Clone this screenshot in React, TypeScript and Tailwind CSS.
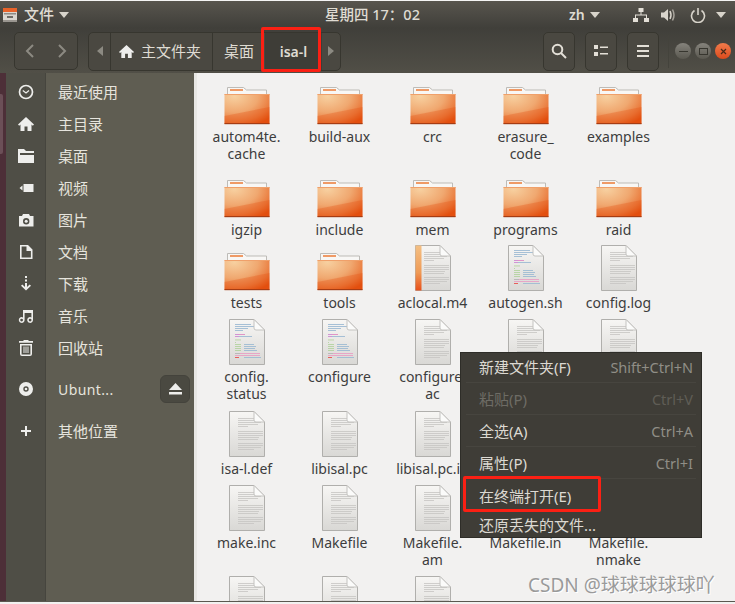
import React from "react";

const font = { fontFamily: '"Noto Sans", "Noto Sans CJK SC", sans-serif' };

function Defs() {
  return (
    <svg className="absolute w-0 h-0">
      <defs>
        <radialGradient id="fg" cx="0.22" cy="0.08" r="1.05">
          <stop offset="0" stopColor="#f7d0a0" />
          <stop offset="0.5" stopColor="#f0a870" />
          <stop offset="0.8" stopColor="#ea7a3c" />
          <stop offset="1" stopColor="#e2500f" />
        </radialGradient>
        <linearGradient id="dg" x1="0" y1="0" x2="0" y2="1">
          <stop offset="0" stopColor="#f7f6f4" />
          <stop offset="1" stopColor="#d9d8d5" />
        </linearGradient>
        <linearGradient id="sg" x1="0" y1="0" x2="0" y2="1">
          <stop offset="0" stopColor="#f4c084" />
          <stop offset="0.6" stopColor="#ef9a55" />
          <stop offset="1" stopColor="#e8501a" />
        </linearGradient>
      </defs>
    </svg>
  );
}

function Folder() {
  return (
    <svg width="48" height="46" viewBox="0 0 48 46" className="block">
      <path d="M4.5 8.5 h16 l3 2.5 h20 v8 h-39z" fill="#f8f7f5" stroke="#bdbbb7" strokeWidth="1" />
      <rect x="7" y="10" width="13" height="2" fill="#ef9a66" />
      <rect x="1.5" y="15" width="45" height="30" fill="url(#fg)" />
      <rect x="1.5" y="15" width="45" height="1" fill="#f0a06a" />
      <rect x="1.5" y="44" width="45" height="1.2" fill="#a63c13" />
      <path d="M1.5 37 L46.5 28 V44 H1.5z" fill="#e4500f" opacity="0.3" />
    </svg>
  );
}

const plainLines: [number, number][] = [
  [7, 17], [9, 22], [11, 24], [13, 21], [15, 11],
  [20, 26], [22, 26], [24, 26], [26, 22], [28, 21],
  [32, 26], [34, 26], [36, 24], [38, 17],
];

function Doc({ kind }: { kind: "plain" | "code" | "m4" }) {
  const code: [number, number, number, string][] = [
    [5, 6, 16, "#9dbad3"], [7, 6, 20, "#9dbad3"], [9, 6, 13, "#9dbad3"], [11, 6, 8, "#9dbad3"],
    [15, 6, 4, "#cf8ad3"], [15, 10, 6, "#e08cc2"], [17, 6, 4, "#cf8ad3"], [17, 10, 13, "#9dbad3"],
    [20.5, 6, 6, "#b3d3a0"], [23, 6, 1, "#b3d3a0"], [25, 6, 6, "#b3d3a0"], [25, 15, 10, "#9dbad3"],
    [27, 6, 6, "#b3d3a0"], [27, 15, 12, "#9dbad3"], [29, 6, 6, "#b3d3a0"], [29, 15, 11, "#9dbad3"],
    [31, 6, 6, "#b3d3a0"], [31, 15, 13, "#9dbad3"],
    [34, 6, 5, "#b5b5b5"], [34, 11, 20, "#e8a0c4"], [36, 6, 25, "#e8a0c4"],
    [38, 6, 4, "#e8514c"], [38, 15, 17, "#9dbad3"],
  ];
  return (
    <svg width="36" height="46" viewBox="0 0 36 46" className="block">
      <path d="M0.5 0.5 H25 L35.5 11 V45.5 H0.5z" fill="url(#dg)" stroke="#b0afac" />
      {kind === "m4" && <rect x="0.5" y="0.5" width="6" height="45" fill="url(#sg)" />}
      {kind === "code"
        ? code.map(([y, x, w, c], i) => <rect key={i} x={x} y={y} width={w} height="0.9" fill={c} />)
        : plainLines.map(([y, w], i) => (
            <rect key={i} x="9" y={y} width={w - 1} height="0.8" fill="#c6c5c2" />
          ))}
      <path d="M25 0.5 V9 Q25 11 27 11 H35.5z" fill="#fbfbfa" stroke="#c4c3c0" />
    </svg>
  );
}

type F = { icon: "folder" | "plain" | "code" | "m4"; name?: string; name2?: string };

const files: F[] = [
  { icon: "folder", name: "autom4te.", name2: "cache" },
  { icon: "folder", name: "build-aux" },
  { icon: "folder", name: "crc" },
  { icon: "folder", name: "erasure_", name2: "code" },
  { icon: "folder", name: "examples" },
  { icon: "folder", name: "igzip" },
  { icon: "folder", name: "include" },
  { icon: "folder", name: "mem" },
  { icon: "folder", name: "programs" },
  { icon: "folder", name: "raid" },
  { icon: "folder", name: "tests" },
  { icon: "folder", name: "tools" },
  { icon: "m4", name: "aclocal.m4" },
  { icon: "code", name: "autogen.sh" },
  { icon: "plain", name: "config.log" },
  { icon: "code", name: "config.", name2: "status" },
  { icon: "code", name: "configure" },
  { icon: "plain", name: "configure.", name2: "ac" },
  { icon: "plain" },
  { icon: "plain" },
  { icon: "plain", name: "isa-l.def" },
  { icon: "plain", name: "libisal.pc" },
  { icon: "plain", name: "libisal.pc.in" },
  { icon: "plain" },
  { icon: "plain" },
  { icon: "plain", name: "make.inc" },
  { icon: "plain", name: "Makefile" },
  { icon: "plain", name: "Makefile.", name2: "am" },
  { icon: "plain", name: "Makefile.in" },
  { icon: "plain", name: "Makefile.", name2: "nmake" },
  { icon: "plain" },
  { icon: "plain" },
  { icon: "plain" },
];

function FileItem({ f }: { f: F }) {
  return (
    <div className="flex flex-col items-center">
      <div className="h-[46px] flex justify-center">
        {f.icon === "folder" ? <Folder /> : <Doc kind={f.icon} />}
      </div>
      <div className="mt-[3px] text-[14px] leading-[17px] text-[#3d3d3d] text-center whitespace-nowrap">
        {f.name && <div>{f.name}</div>}
        {f.name2 && <div>{f.name2}</div>}
      </div>
    </div>
  );
}

const I = ({ children }: { children: React.ReactNode }) => (
  <svg width="18" height="18" viewBox="0 0 18 18" fill="#eeeeec" className="block">
    {children}
  </svg>
);

const sideIcons: Record<string, React.ReactNode> = {
  clock: (
    <I>
      <circle cx="9" cy="9" r="6.5" fill="none" stroke="#eeeeec" strokeWidth="1.7" />
      <path d="M5.8 7.5 L9 10 L12 7.5" fill="none" stroke="#eeeeec" strokeWidth="1.2" />
    </I>
  ),
  home: (
    <I>
      <path d="M9 2 L17 9.5 L15.8 10.7 L14.5 9.6 V16 H10.5 V11.5 H7.5 V16 H3.5 V9.6 L2.2 10.7 L1 9.5z" />
    </I>
  ),
  folder: (
    <I>
      <path d="M1 2 H7 L9 4 H17 V6 H3 V8 H17 V16 H1z" />
    </I>
  ),
  video: (
    <I>
      <path d="M6.5 5 H16.5 V13 H6.5z M2.5 9 L5.5 6.5 V11.5z" />
    </I>
  ),
  camera: (
    <I>
      <path
        fillRule="evenodd"
        d="M6 3 H12 L13 5 H16.5 V15.5 H2 V5 H5z M9.2 7 A3.2 3.2 0 1 0 9.21 13.4 A3.2 3.2 0 1 0 9.2 7z"
      />
      <circle cx="9.2" cy="10.2" r="1.5" />
    </I>
  ),
  doc: (
    <I>
      <path
        fillRule="evenodd"
        d="M3 2 H11 L15.5 6.5 V16 H3z M4.6 3.6 V14.4 H13.9 V8 H9.5 V3.6z"
      />
    </I>
  ),
  download: (
    <I>
      <path d="M8 1 H10 V3 H8z M8 4.5 H10 V6.5 H8z M8 8 H10 V12 L12.7 9.5 L14 10.8 L9 15.5 L4 10.8 L5.3 9.5 L8 12z" />
    </I>
  ),
  music: (
    <I>
      <path
        fillRule="evenodd"
        d="M6 3 H16 V13 A2.9 2.9 0 1 1 14.4 10.4 V6 H7.6 V13 A2.9 2.9 0 1 1 6 10.4z M4.6 11.7 A1.4 1.4 0 1 0 4.61 14.5 A1.4 1.4 0 1 0 4.6 11.7z M13.1 11.7 A1.4 1.4 0 1 0 13.11 14.5 A1.4 1.4 0 1 0 13.1 11.7z"
      />
    </I>
  ),
  trash: (
    <I>
      <path d="M6.5 1 H11.5 V2 H16 V3.7 H2 V2 H6.5z" />
      <path
        fillRule="evenodd"
        d="M3 5 H15 V15 Q15 17 13 17 H5 Q3 17 3 15z M4.6 6.5 V15.4 H13.4 V6.5z"
      />
      <path d="M6.5 7.5 H7.5 V14 H6.5z M8.5 7.5 H9.5 V14 H8.5z M10.5 7.5 H11.5 V14 H10.5z" />
    </I>
  ),
  disc: (
    <I>
      <path
        fillRule="evenodd"
        d="M9 2 A7 7 0 1 0 9.01 16 A7 7 0 1 0 9 2z M9 6.3 A2.7 2.7 0 1 0 9.01 11.7 A2.7 2.7 0 1 0 9 6.3z"
      />
      <circle cx="9" cy="9" r="1.3" />
    </I>
  ),
  plus: (
    <I>
      <path d="M8 4 H10 V8 H14 V10 H10 V14 H8 V10 H4 V8 H8z" />
    </I>
  ),
};

const sideItems: { icon: string; label: string; mt?: string; eject?: boolean; track?: boolean }[] = [
  { icon: "clock", label: "最近使用" },
  { icon: "home", label: "主目录" },
  { icon: "folder", label: "桌面" },
  { icon: "video", label: "视频" },
  { icon: "camera", label: "图片" },
  { icon: "doc", label: "文档" },
  { icon: "download", label: "下载" },
  { icon: "music", label: "音乐" },
  { icon: "trash", label: "回收站" },
  { icon: "disc", label: "Ubunt...", mt: "mt-[9px]", eject: true, track: true },
  { icon: "plus", label: "其他位置", mt: "mt-[10px]" },
];

const menu: { label: string; key?: string; off?: boolean; sep?: boolean; h: string; pt: string }[] = [
  { label: "新建文件夹(F)", key: "Shift+Ctrl+N", sep: true, h: "h-[30px]", pt: "pt-0" },
  { label: "粘贴(P)", key: "Ctrl+V", off: true, sep: true, h: "h-[32px]", pt: "pt-[2px]" },
  { label: "全选(A)", key: "Ctrl+A", sep: true, h: "h-[32px]", pt: "pt-[2px]" },
  { label: "属性(P)", key: "Ctrl+I", sep: true, h: "h-[32px]", pt: "pt-[2px]" },
  { label: "在终端打开(E)", h: "h-[32px]", pt: "pt-[2px]" },
  { label: "还原丢失的文件...", h: "h-[26px]", pt: "pt-[2px]" },
];

function Btn({ children }: { children: React.ReactNode }) {
  return (
    <div className="w-[32px] h-[39px] rounded-[5px] border border-[#37362f] bg-[#4a4841] flex items-center justify-center">
      {children}
    </div>
  );
}

export default function App() {
  return (
    <div className="relative w-[735px] h-[604px] overflow-hidden bg-[#f2f1f0]" style={font}>
      <Defs />
      <div className="h-[1px] bg-[#f4f4f4]" />
      {/* top panel */}
      <div className="h-[27px] flex items-center bg-gradient-to-b from-[#58554e] to-[#403f3a] text-[#dfdbd2]">
        <svg width="16" height="16" viewBox="0 0 16 16" className="ml-[2px] block">
          <rect x="1" y="1" width="14" height="14" rx="1.5" fill="#d9d5cf" />
          <rect x="1" y="1" width="14" height="4" fill="#e8632a" />
          <rect x="2" y="6" width="12" height="1.5" fill="#8d8a85" />
          <rect x="5" y="9" width="6" height="2" fill="#6e6b66" />
          <rect x="1" y="13" width="14" height="2" fill="#9a9690" />
        </svg>
        <span className="ml-[6px] text-[15px] font-medium">文件</span>
        <svg width="10" height="6" viewBox="0 0 10 6" className="ml-[5px] block" fill="#d8d4cb">
          <path d="M0 0 H10 L5 6z" />
        </svg>
        <span className="ml-[256px] w-[96px] text-[14.5px] font-medium whitespace-nowrap">星期四 17：02</span>
        <span className="ml-[148px] text-[14px] font-semibold">zh</span>
        <svg width="10" height="6" viewBox="0 0 10 6" className="ml-[5px] block" fill="#d8d4cb">
          <path d="M0 0 H10 L5 6z" />
        </svg>
        <svg width="16" height="16" viewBox="0 0 16 16" className="ml-[33px] block" fill="#e3dfd7">
          <path d="M5.5 1 H10.5 V5 H8.5 V7.5 H14 V11 H16 V15 H11 V11 H13 V8.5 H3 V11 H5 V15 H0 V11 H2 V7.5 H7.5 V5 H5.5z" />
        </svg>
        <svg width="16" height="16" viewBox="0 0 16 16" className="ml-[12px] block" fill="#d8d4cb">
          <path d="M0 5.5 H3 L7 2 V14 L3 10.5 H0z" />
          <path d="M9 4 Q11 8 9 12" fill="none" stroke="#d8d4cb" strokeWidth="1.5" />
          <path d="M11.5 2.5 Q14.5 8 11.5 13.5" fill="none" stroke="#a8a49c" strokeWidth="1.5" />
        </svg>
        <svg width="16" height="16" viewBox="0 0 16 16" className="ml-[13px] block" fill="none" stroke="#d8d4cb" strokeWidth="1.6">
          <path d="M4.5 3.5 A6.5 6.5 0 1 0 11.5 3.5" />
          <path d="M8 1 V8" />
        </svg>
        <svg width="10" height="6" viewBox="0 0 10 6" className="ml-[10px] block" fill="#d8d4cb">
          <path d="M0 0 H10 L5 6z" />
        </svg>
      </div>
      {/* header bar */}
      <div className="h-[45px] flex items-center bg-gradient-to-b from-[#403f3a] to-[#514f47] pl-[14px] pt-[1px]">
        <div className="w-[64px] h-[38px] rounded-[5px] border border-[#37362f] bg-[#4a4841] flex items-center justify-between px-[10px]">
          <svg width="10" height="14" viewBox="0 0 10 14" fill="none" stroke="#8c8a82" strokeWidth="2"><path d="M8 1 L2 7 L8 13" /></svg>
          <svg width="10" height="14" viewBox="0 0 10 14" fill="none" stroke="#8c8a82" strokeWidth="2"><path d="M2 1 L8 7 L2 13" /></svg>
        </div>
        <div className="ml-[10px] w-[253px] h-[39px] rounded-[5px] border border-[#37362f] bg-[#4a4841] flex text-[#dfdbd2] text-[15px]">
          <div className="w-[22px] flex items-center justify-center border-r border-[#37362f]">
            <svg width="6" height="10" viewBox="0 0 6 10" fill="#8c8a82"><path d="M6 0 V10 L0 5z" /></svg>
          </div>
          <div className="w-[102px] flex items-center pl-[7px] border-r border-[#37362f]">
            <svg width="17" height="17" viewBox="0 0 18 18" fill="#eeeeec" className="mr-[6px] shrink-0">
              <path d="M9 2 L17 9.5 L15.8 10.7 L14.5 9.6 V16 H10.5 V11.5 H7.5 V16 H3.5 V9.6 L2.2 10.7 L1 9.5z" />
            </svg>
            <span>主文件夹</span>
          </div>
          <div className="w-[52px] flex items-center justify-center">桌面</div>
          <div className="w-[57px] flex items-center justify-center bg-[#3e3d37] text-[14px] font-semibold">isa-l</div>
          <div className="flex-1 flex items-center justify-center">
            <svg width="6" height="10" viewBox="0 0 6 10" fill="#8c8a82"><path d="M0 0 V10 L6 5z" /></svg>
          </div>
        </div>
        <div className="ml-[202px] flex gap-[10px]">
          <Btn>
            <svg width="16" height="16" viewBox="0 0 16 16" fill="none" stroke="#e3dfd7" strokeWidth="2">
              <circle cx="6.5" cy="6.5" r="4.8" />
              <path d="M10 10 L15 15" />
            </svg>
          </Btn>
          <Btn>
            <svg width="14" height="12" viewBox="0 0 14 12" fill="#e3dfd7">
              <path d="M0 0 H4 V4 H0z M0 7 H4 V11 H0z M6 1.5 H14 V3 H6z M6 8 H14 V9.5 H6z" />
            </svg>
          </Btn>
          <Btn>
            <svg width="12" height="12" viewBox="0 0 12 12" fill="#e3dfd7">
              <path d="M0 0 H12 V2 H0z M0 5 H12 V7 H0z M0 10 H12 V12 H0z" />
            </svg>
          </Btn>
        </div>
        <div className="ml-[9px] w-[1px] h-[33px] bg-[#44433c]" />
        <div className="ml-[6px] flex gap-[4px]">
          <div className="w-[16px] h-[16px] rounded-full bg-gradient-to-b from-[#85837c] to-[#5a5850] flex items-center justify-center">
            <div className="w-[9px] h-[1px] bg-[#37362f]" />
          </div>
          <div className="w-[16px] h-[16px] rounded-full bg-gradient-to-b from-[#85837c] to-[#5a5850] flex items-center justify-center">
            <div className="w-[9px] h-[7px] border border-[#37362f]" />
          </div>
          <div className="w-[16px] h-[16px] rounded-full bg-gradient-to-b from-[#f07a4a] to-[#dc4a1a] flex items-center justify-center">
            <svg width="7" height="7" viewBox="0 0 7 7" stroke="#4a2a18" strokeWidth="1.2"><path d="M1 1 L6 6 M6 1 L1 6" /></svg>
          </div>
        </div>
      </div>
      {/* body */}
      <div className="h-[528px] flex">
        <div className="w-[6px] bg-[#4d2f38] relative">
          <div className="absolute left-0 top-[21px] w-[3px] h-[60px] rounded-r-[2px] bg-[#6b4f57]" />
        </div>
        <div className="w-[188px] bg-[#5f5d52] flex">
          <div className="flex-1 pt-[3px] text-[15px] text-[#e6e4dd] bg-[linear-gradient(to_right,#4f4e46_0,#4f4e46_39px,#46453e_39px,#46453e_40px,transparent_40px)]">
            {sideItems.map((s) => (
              <div key={s.label} className={`h-[32px] flex items-center ${s.mt ?? ""}`}>
                <div className="w-[40px] flex justify-center">{sideIcons[s.icon]}</div>
                <span className={`ml-[12px] ${s.track ? "tracking-[0.4px] text-[14px]" : ""}`}>{s.label}</span>
                {s.eject && (
                  <div className="ml-auto mr-[4px] w-[30px] h-[28px] rounded-[6px] bg-[#4a4941] border border-[#44433c] flex items-center justify-center">
                    <svg width="13" height="12" viewBox="0 0 13 12" fill="#eeeeec">
                      <path d="M6.5 0 L13 7 H0z M0 9 H13 V11.5 H0z" />
                    </svg>
                  </div>
                )}
              </div>
            ))}
          </div>
        </div>
        <div className="w-[3px] bg-[#e8e7e4]" />
        <div className="flex-1 overflow-hidden pt-[6px] pl-[3px]">
          <div className="grid grid-cols-[repeat(5,93px)] grid-rows-[93px_73px_74px_92px_74px_91px_48px]">
            {files.map((f, i) => (
              <FileItem key={i} f={f} />
            ))}
          </div>
        </div>
      </div>
      <div className="h-[1px] bg-[#5a5850]" />
      <div className="h-[2px] bg-[#f2f1f0]" />

      {/* context menu */}
      <div className="absolute left-[460px] top-[352px] w-[242px] h-[186px] bg-[#3f3d37] border border-[#2e2d28] text-[15px] text-[#dcd9d2]">
        {menu.map((m) => (
          <div
            key={m.label}
            className={`${m.h} ${m.pt} mx-[5px] flex items-center justify-between pl-[13px] pr-[3px] ${m.sep ? "border-b border-[#47453f]" : ""} ${m.off ? "text-[#6e6c65]" : ""}`}
          >
            <span>{m.label}</span>
            {m.key && (
              <span className={`text-[14.5px] ${m.off ? "text-[#5f5d56]" : "text-[#908e86]"}`}>{m.key}</span>
            )}
          </div>
        ))}
      </div>

      {/* red annotations */}
      <div className="absolute left-[261px] top-[27px] w-[60px] h-[45px] border-[3px] border-[#fb2014] rounded-[2px]" />
      <div className="absolute left-[463px] top-[476px] w-[138px] h-[36px] border-[3px] border-[#fb2014] rounded-[2px]" />

      {/* watermark */}
      <div className="absolute left-[528px] top-[573px] text-[19px] leading-[24px] text-[#9a9a9a] whitespace-nowrap [text-shadow:1px_1px_0_#ffffff]">
        CSDN @球球球球球吖
      </div>
    </div>
  );
}
